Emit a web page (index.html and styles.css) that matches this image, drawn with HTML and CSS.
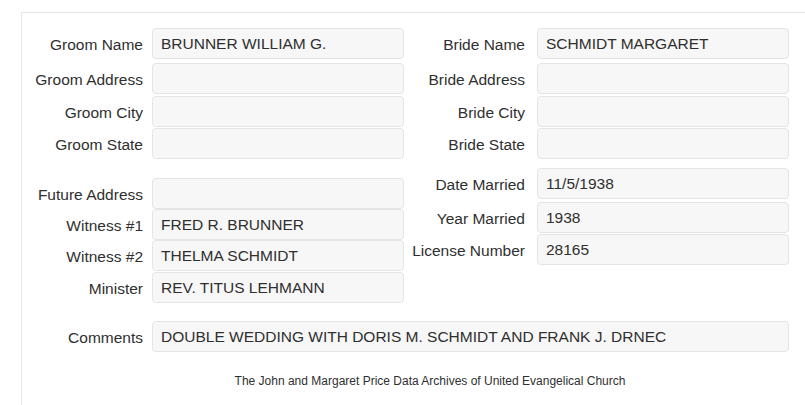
FILE: index.html
```html
<!DOCTYPE html>
<html lang="en">
<head>
<meta charset="utf-8">
<title>Marriage Record</title>
<link rel="stylesheet" href="styles.css">
</head>
<body>
<div class="panel">
  <div class="sec sec-top">
    <div class="half half-l">
      <div class="row"><span class="lbl">Groom Name</span><div class="field">BRUNNER WILLIAM G.</div></div>
      <div class="row"><span class="lbl">Groom Address</span><div class="field"></div></div>
      <div class="row"><span class="lbl">Groom City</span><div class="field"></div></div>
      <div class="row"><span class="lbl">Groom State</span><div class="field"></div></div>
    </div>
    <div class="half half-r">
      <div class="row"><span class="lbl">Bride Name</span><div class="field">SCHMIDT MARGARET</div></div>
      <div class="row"><span class="lbl">Bride Address</span><div class="field"></div></div>
      <div class="row"><span class="lbl">Bride City</span><div class="field"></div></div>
      <div class="row"><span class="lbl">Bride State</span><div class="field"></div></div>
    </div>
  </div>
  <div class="sec sec-mid">
    <div class="half half-l">
      <div class="row"><span class="lbl">Future Address</span><div class="field"></div></div>
      <div class="row"><span class="lbl">Witness #1</span><div class="field">FRED R. BRUNNER</div></div>
      <div class="row"><span class="lbl">Witness #2</span><div class="field">THELMA SCHMIDT</div></div>
      <div class="row"><span class="lbl">Minister</span><div class="field">REV. TITUS LEHMANN</div></div>
    </div>
    <div class="half half-r">
      <div class="row"><span class="lbl">Date Married</span><div class="field">11/5/1938</div></div>
      <div class="row"><span class="lbl">Year Married</span><div class="field">1938</div></div>
      <div class="row"><span class="lbl">License Number</span><div class="field">28165</div></div>
    </div>
  </div>
  <div class="wide">
    <div class="row"><span class="lbl">Comments</span><div class="field">DOUBLE WEDDING WITH DORIS M. SCHMIDT AND FRANK J. DRNEC</div></div>
  </div>
  <p class="footer">The John and Margaret Price Data Archives of United Evangelical Church</p>
</div>
</body>
</html>
```

FILE: styles.css
```css
html, body {
  margin: 0;
  padding: 0;
  background: #ffffff;
  overflow: hidden;
}
body {
  font-family: "Liberation Sans", Arial, sans-serif;
  color: #2f2f2f;
}
.panel {
  margin: 12px 0 0 21px;
  width: 816px;
  height: 377px;
  border-top: 1px solid #e6e6e6;
  border-left: 1px solid #e6e6e6;
  padding-top: 15px;
}
.sec {
  display: flex;
}
.half {
  display: grid;
  align-content: start;
}
.half-l {
  grid-template-columns: 130px 252px;
}
.half-r {
  grid-template-columns: 133px 252px;
}
.row {
  display: contents;
}
.lbl {
  align-self: start;
  height: 31px;
  line-height: 31px;
  padding-top: 1px;
  box-sizing: border-box;
  text-align: right;
  font-size: 15.5px;
  white-space: nowrap;
}
.half-l .lbl,
.wide .lbl {
  padding-right: 9px;
}
.half-r .lbl {
  padding-right: 12px;
}
.field {
  align-self: start;
  box-sizing: border-box;
  height: 31px;
  border: 1px solid #e4e4e4;
  border-radius: 4px;
  background: #f7f7f7;
  padding: 0 8px;
  line-height: 29px;
  font-size: 15.5px;
  white-space: nowrap;
}
.sec-top .half {
  grid-template-rows: 35px 33px 32px 31px;
}
.sec-mid {
  margin-top: 9px;
}
.sec-mid .half-l {
  padding-top: 10px;
  grid-template-rows: 31px 31px 32px 31px;
}
.sec-mid .half-r {
  grid-template-rows: 34px 32px 31px;
}
.wide {
  display: grid;
  grid-template-columns: 130px 637px;
  margin-top: 18px;
}
.footer {
  margin: 21px 0 0 0;
  font-size: 12px;
  line-height: 17px;
  text-align: center;
}
```
